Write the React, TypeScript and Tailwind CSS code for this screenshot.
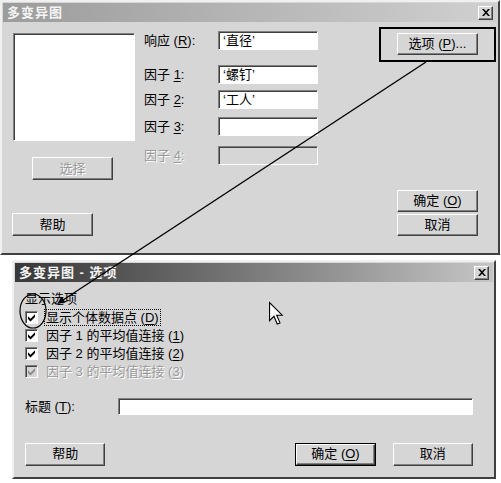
import React from 'react';

const FONT = 'font-["Liberation_Sans","Noto_Sans_CJK_SC",sans-serif]';

const raised =
  'border border-t-white border-l-white border-r-[#404040] border-b-[#404040] shadow-[inset_-1px_-1px_0_#808080]';
const sunken =
  'border border-t-[#808080] border-l-[#808080] border-r-white border-b-white shadow-[inset_1px_1px_0_#404040]';

const Key: React.FC<{ k: string }> = ({ k }) => <span className="underline underline-offset-2">{k}</span>;

interface BtnProps {
  children: React.ReactNode;
  className?: string;
  disabled?: boolean;
  isDefault?: boolean;
}

const Btn: React.FC<BtnProps> = ({ children, className = '', disabled, isDefault }) => {
  const inner = (
    <div
      className={`flex h-full w-full items-center justify-center bg-[#d6d6d6] text-[13px] ${raised} ${
        disabled ? 'text-[#9a9a9a] [text-shadow:1px_1px_0_#fff]' : 'text-black'
      }`}
    >
      {children}
    </div>
  );
  if (isDefault) {
    return <div className={`border border-black ${className}`}>{inner}</div>;
  }
  return <div className={className}>{inner}</div>;
};

const CloseBox: React.FC = () => (
  <div className={`flex h-[14px] w-[15px] items-center justify-center bg-[#d6d6d6] ${raised}`}>
    <svg width="8" height="7" viewBox="0 0 8 7">
      <path d="M0 0h2l2 2.3L6 0h2L5 3.5 8 7H6L4 4.7 2 7H0l3-3.5z" fill="#000" />
    </svg>
  </div>
);

const TitleBar: React.FC<{ title: string; gradient: string }> = ({ title, gradient }) => (
  <div className={`flex h-[19px] items-center justify-between pl-[4px] pr-[4px] ${gradient}`}>
    <span className="text-[13px] font-bold tracking-[1px] text-[#f4f4f4]">{title}</span>
    <CloseBox />
  </div>
);

const Field: React.FC<{ value?: string; disabled?: boolean; className?: string }> = ({
  value,
  disabled,
  className = '',
}) => (
  <div
    className={`flex items-center pl-[4px] text-[13px] text-black ${sunken} ${
      disabled ? 'bg-[#d6d6d6]' : 'bg-white'
    } ${className}`}
  >
    {value}
  </div>
);

const Check: React.FC<{ disabled?: boolean }> = ({ disabled }) => (
  <div
    className={`flex h-[13px] w-[13px] shrink-0 items-center justify-center ${sunken} ${
      disabled ? 'bg-[#d6d6d6]' : 'bg-white'
    }`}
  >
    <svg width="9" height="9" viewBox="0 0 9 9">
      <path d="M1 3.3l2.5 2.5L8 1.3v2.6L3.5 8.4 1 5.9z" fill={disabled ? '#8a8a8a' : '#000'} />
    </svg>
  </div>
);

const FieldRow: React.FC<{
  label: React.ReactNode;
  value?: string;
  disabled?: boolean;
  className?: string;
}> = ({ label, value, disabled, className = '' }) => (
  <div className={`flex items-center ${className}`}>
    <div
      className={`w-[74px] text-[13px] ${
        disabled ? 'text-[#9a9a9a] [text-shadow:1px_1px_0_#fff]' : 'text-black'
      }`}
    >
      {label}
    </div>
    <Field value={value} disabled={disabled} className="h-[19px] w-[100px]" />
  </div>
);

const CheckRow: React.FC<{ children: React.ReactNode; disabled?: boolean; focus?: boolean }> = ({
  children,
  disabled,
  focus,
}) => (
  <div className="flex h-[18px] items-center gap-[6px]">
    <Check disabled={disabled} />
    <span
      className={`text-[13px] leading-[15px] ${
        disabled ? 'text-[#9a9a9a] [text-shadow:1px_1px_0_#fff]' : 'text-black'
      } ${focus ? 'border border-dotted border-black px-px' : 'border border-transparent px-px'}`}
    >
      {children}
    </span>
  </div>
);

const dialogFrame =
  'flex flex-col border-2 border-t-[#f0f0f0] border-l-[#f0f0f0] border-r-[#404040] border-b-[#404040] bg-[#d6d6d6] p-px';

const MainDialog: React.FC = () => (
  <div className={`h-[255px] w-[500px] ${dialogFrame}`}>
    <TitleBar title="多变异图" gradient="bg-gradient-to-r from-[#9c9c9c] to-[#d0d0d0]" />
    <div className="flex flex-1">
      {/* variables list + select/help */}
      <div className="ml-[9px] flex w-[123px] flex-col">
        <div className={`ml-px mt-[11px] h-[108px] w-[122px] bg-white ${sunken}`} />
        <Btn disabled className="ml-[20px] mt-[16px] h-[23px] w-[81px]">
          选择
        </Btn>
        <Btn className="mt-[33px] h-[23px] w-[81px]">帮助</Btn>
      </div>

      {/* response + factors */}
      <div className="ml-[9px] flex w-[174px] flex-col">
        <FieldRow
          className="mt-[9px]"
          label={
            <>
              响应 (<Key k="R" />):
            </>
          }
          value="‘直径’"
        />
        <FieldRow
          className="mt-[14px]"
          label={
            <>
              因子 <Key k="1" />:
            </>
          }
          value="‘螺钉’"
        />
        <FieldRow
          className="mt-[6px]"
          label={
            <>
              因子 <Key k="2" />:
            </>
          }
          value="‘工人’"
        />
        <FieldRow
          className="mt-[7px]"
          label={
            <>
              因子 <Key k="3" />:
            </>
          }
        />
        <FieldRow
          className="mt-[10px]"
          disabled
          label={
            <>
              因子 <Key k="4" />:
            </>
          }
        />
      </div>

      {/* options / ok / cancel */}
      <div className="ml-[61px] flex w-[117px] flex-col">
        <div className="mt-[5px] border-2 border-black pb-[5px] pl-[16px] pt-[4px]">
          <Btn className="h-[22px] w-[81px]">
            <span>
              选项 (<Key k="P" />)...
            </span>
          </Btn>
        </div>
        <Btn className="ml-[18px] mt-[128px] h-[22px] w-[81px]">
          <span>
            确定 (<Key k="O" />)
          </span>
        </Btn>
        <Btn className="ml-[18px] mt-[2px] h-[22px] w-[81px]">取消</Btn>
      </div>
    </div>
  </div>
);

const OptionsDialog: React.FC = () => (
  <div className={`ml-[12px] mt-[5px] h-[219px] w-[484px] ${dialogFrame}`}>
    <TitleBar title="多变异图 - 选项" gradient="bg-gradient-to-r from-[#383838] to-[#c6c6c6]" />
    <div className="flex flex-1 flex-col pl-[10px] pr-[20px]">
      <div className="mt-[9px] text-[13px] leading-[16px] text-black">显示选项</div>
      <div className="mt-[1px] flex flex-col">
        <CheckRow focus>
          显示个体数据点 (<Key k="D" />)
        </CheckRow>
        <CheckRow>
          因子 1 的平均值连接 (<Key k="1" />)
        </CheckRow>
        <CheckRow>
          因子 2 的平均值连接 (<Key k="2" />)
        </CheckRow>
        <CheckRow disabled>
          因子 3 的平均值连接 (<Key k="3" />)
        </CheckRow>
      </div>
      <div className="mt-[17px] flex items-center">
        <div className="w-[93px] text-[13px] text-black">
          标题 (<Key k="T" />):
        </div>
        <Field className="h-[17px] w-[356px]" />
      </div>
      <div className="mt-[26px] flex items-center">
        <Btn className="h-[23px] w-[81px]">帮助</Btn>
        <Btn isDefault className="ml-[190px] h-[23px] w-[81px]">
          <span>
            确定 (<Key k="O" />)
          </span>
        </Btn>
        <Btn className="ml-[17px] h-[23px] w-[81px]">取消</Btn>
      </div>
    </div>
  </div>
);

const Annotations: React.FC = () => (
  <svg className="pointer-events-none absolute left-0 top-0" width="501" height="483" viewBox="0 0 501 483">
    <line x1="426" y1="62" x2="60" y2="302" stroke="#000" strokeWidth="1.4" />
    <path d="M57 304 L65.6 302.5 L61.8 296.7 Z" fill="#000" />
    <ellipse cx="33" cy="311" rx="13" ry="17" fill="none" stroke="#000" strokeWidth="1.2" />
    <g transform="translate(269 302) scale(1.1)">
      <path
        d="M0.5 0.5 V17 L4.5 13 L7.5 20 L10 19 L7 12 H12 Z"
        fill="#fff"
        stroke="#000"
        strokeWidth="1"
        strokeLinejoin="miter"
      />
    </g>
  </svg>
);

export default function App() {
  return (
    <div className={`relative h-[483px] w-[501px] overflow-hidden bg-white ${FONT}`}>
      <MainDialog />
      <OptionsDialog />
      <Annotations />
    </div>
  );
}
